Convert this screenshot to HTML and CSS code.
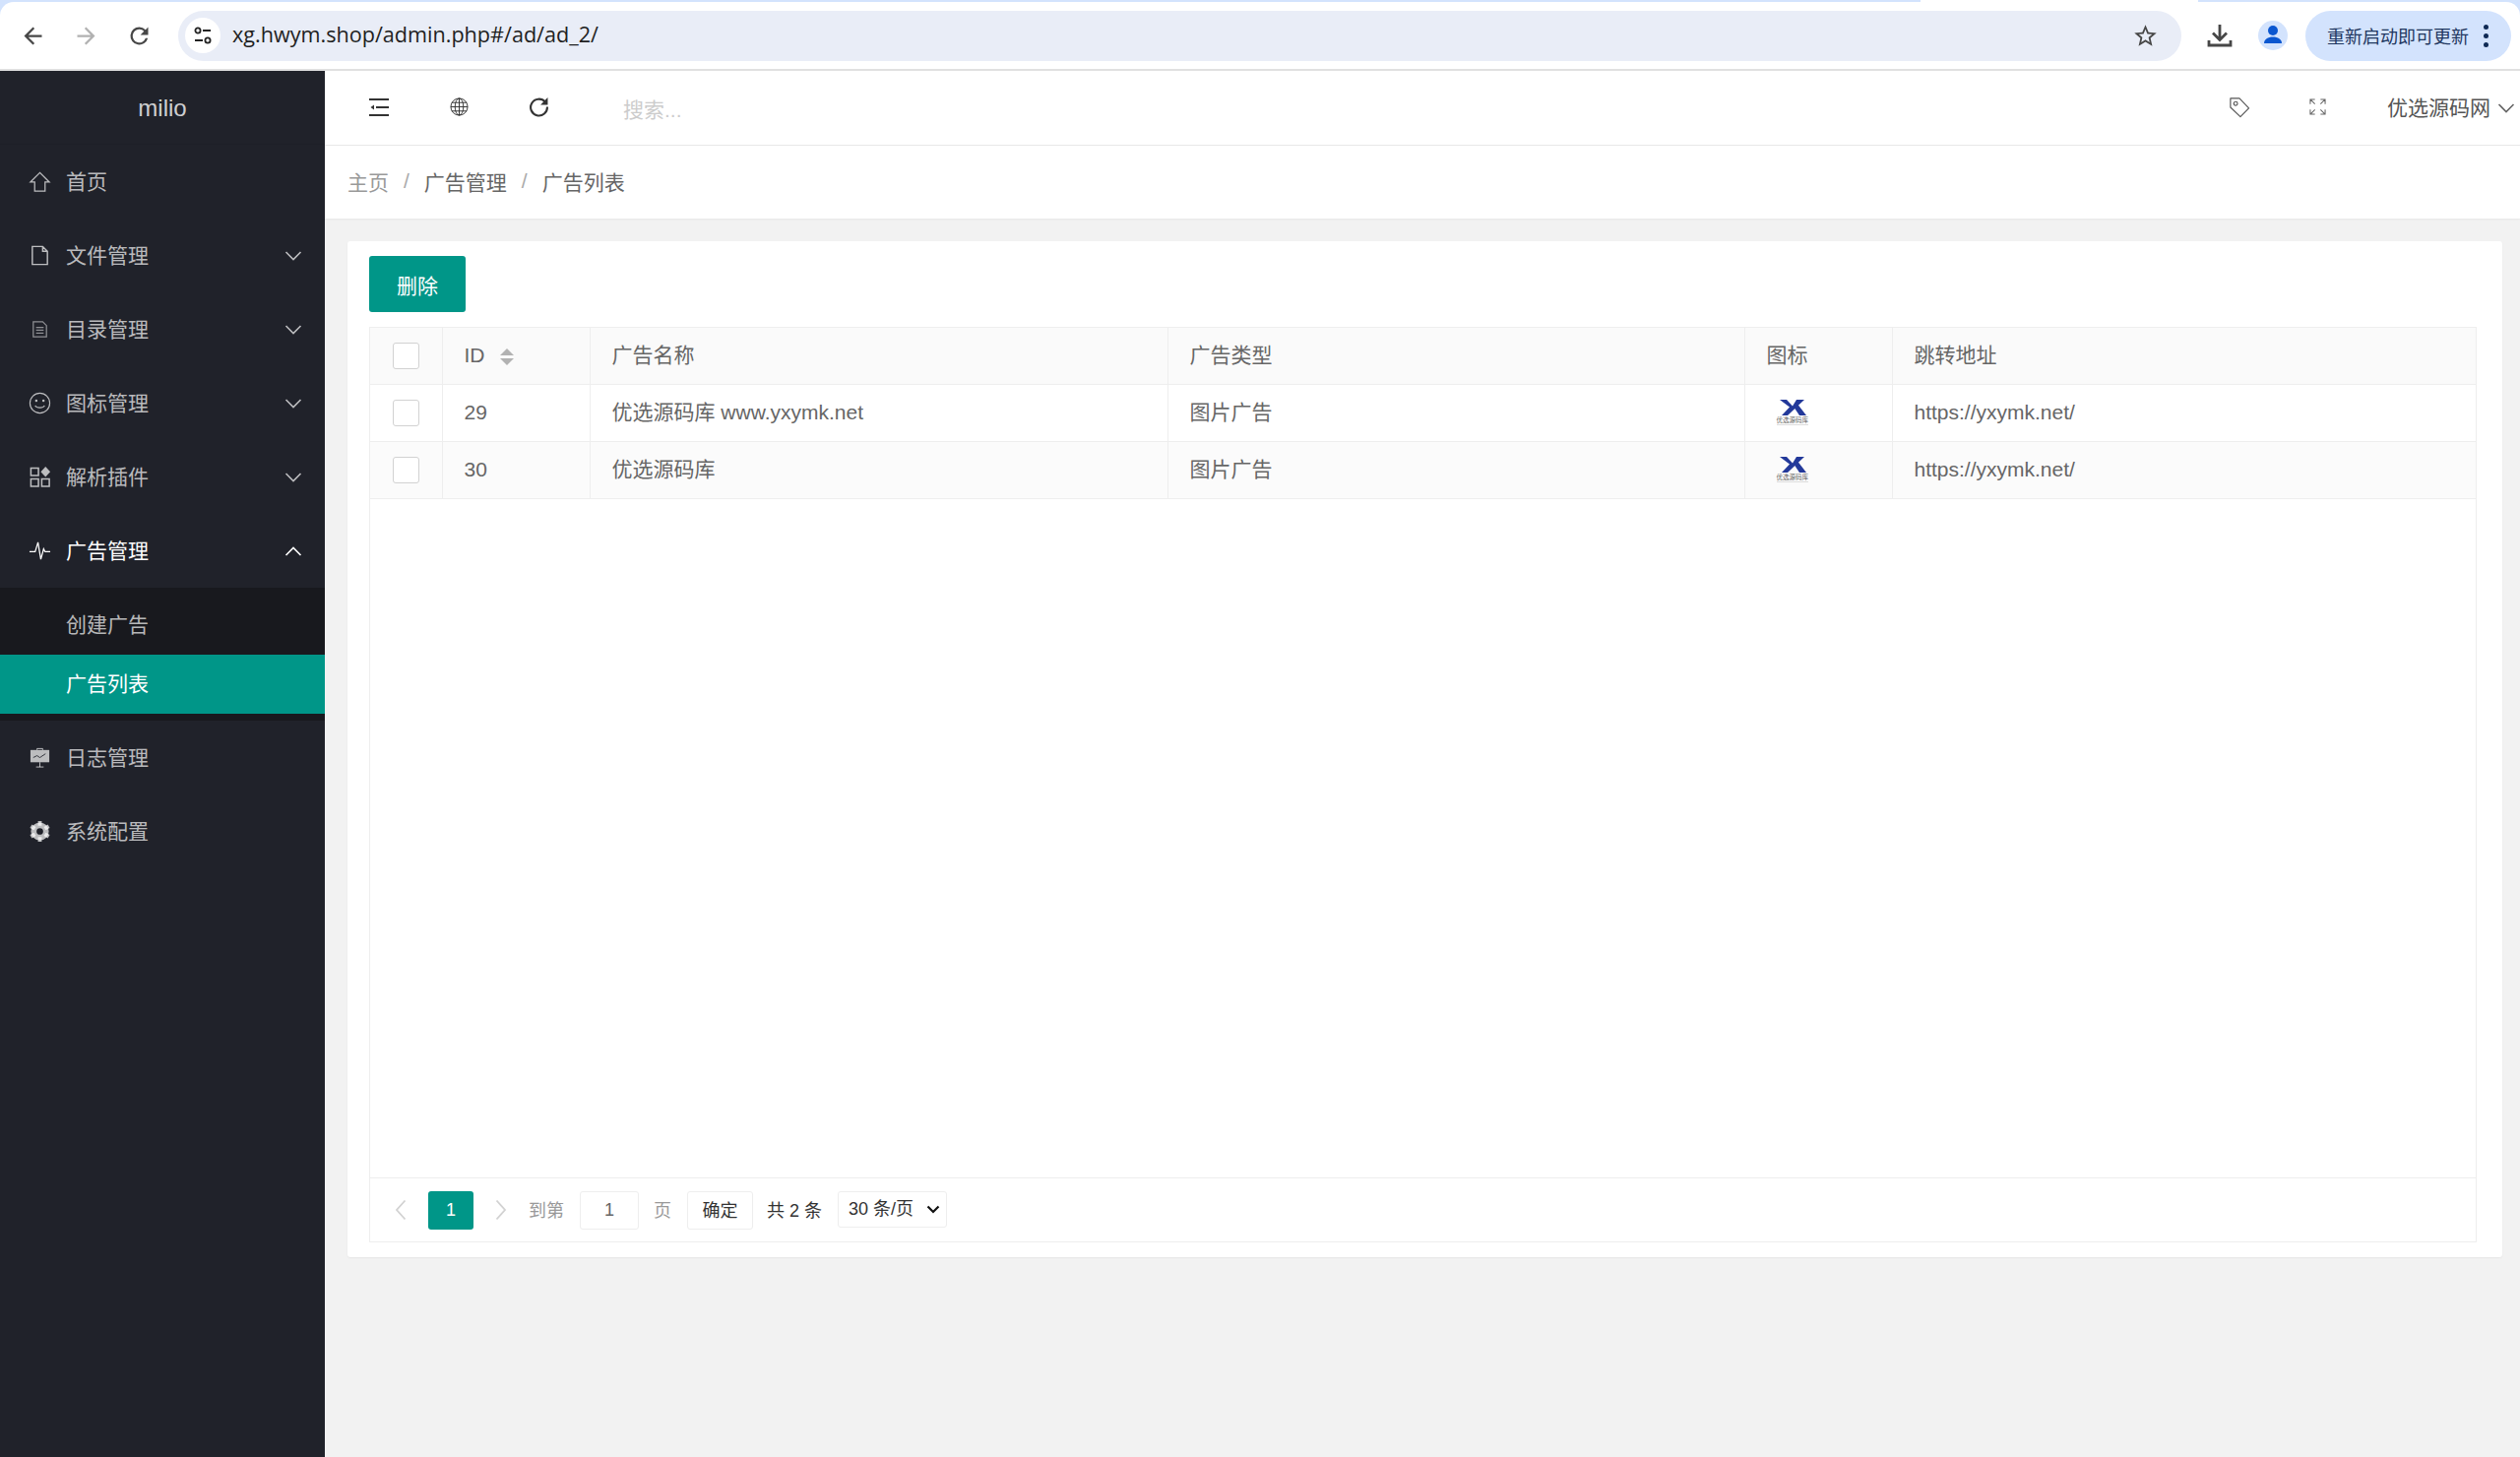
FILE: index.html
```html
<!DOCTYPE html>
<html lang="zh-CN">
<head>
    <meta charset="UTF-8">
    <title>milio</title>
    <link rel="stylesheet" href="styles.css">
</head>
<body>
    <svg class="defs" width="0" height="0">
        <symbol id="chev" viewBox="0 0 18 10"><path d="M1.500 1 9 8.500 16.500 1" fill="none" stroke="currentColor" stroke-width="1.600"/></symbol>
        <symbol id="yx" viewBox="0 0 28 16">
            <path d="M1 0h7l6 6.500L18 0h8L9 16H3l8-8.500z" fill="#23399a"/>
            <path d="M16 8.500 19.500 5 28 16h-7z" fill="#23399a"/>
        </symbol>
    </svg>

    <div class="chrome">
        <div class="tabstrip"><span class="tab-gap"></span></div>
        <div class="toolbar">
            <svg class="tb-ico back" viewBox="0 0 24 24"><path d="M20 11H7.830l5.590-5.590L12 4l-8 8 8 8 1.410-1.410L7.830 13H20z"/></svg>
            <svg class="tb-ico fwd" viewBox="0 0 24 24"><path d="M4 11h12.170l-5.590-5.590L12 4l8 8-8 8-1.410-1.410L16.170 13H4z"/></svg>
            <svg class="tb-ico reload" viewBox="0 0 24 24"><path d="M17.650 6.350A7.960 7.960 0 0 0 12 4a8 8 0 1 0 7.730 10h-2.080A6 6 0 1 1 12 6c1.660 0 3.140.69 4.220 1.780L13 11h7V4z"/></svg>
            <div class="omnibox">
                <span class="site-btn">
                    <svg viewBox="0 0 20 20" width="20" height="20"><circle cx="5" cy="5" r="2.600" fill="none" stroke="#222" stroke-width="1.800"/><path d="M10 5h8M2 15h8" stroke="#222" stroke-width="1.800"/><circle cx="15" cy="15" r="2.600" fill="none" stroke="#222" stroke-width="1.800"/></svg>
                </span>
                <span class="url">xg.hwym.shop/admin.php#/ad/ad_2/</span>
                <svg class="star" viewBox="0 0 24 24"><path d="M22 9.240l-7.190-.62L12 2 9.190 8.630 2 9.240l5.460 4.730L5.820 21 12 17.270 18.180 21l-1.630-7.030zM12 15.400l-3.760 2.270 1-4.280-3.320-2.880 4.380-.38L12 6.100l1.710 4.040 4.380.38-3.320 2.880 1 4.280z"/></svg>
            </div>
            <svg class="download" viewBox="0 0 26 26"><path d="M13 2v15M6 10.500l7 7 7-7" fill="none" stroke="#474747" stroke-width="2.800"/><path d="M2 18v5h22v-5" fill="none" stroke="#474747" stroke-width="2.800"/></svg>
            <span class="avatar">
                <svg viewBox="0 0 30 30" width="30" height="30"><circle cx="15" cy="10" r="5" fill="#0b57d0"/><path d="M6 23c0-4 4-6.500 9-6.500s9 2.500 9 6.500z" fill="#0b57d0"/></svg>
            </span>
            <div class="update-pill">
                <span>重新启动即可更新</span>
                <i class="dots"><b></b><b></b><b></b></i>
            </div>
        </div>
    </div>

    <div class="app">
        <aside class="sidebar">
            <div class="logo">milio</div>
            <ul class="nav">
                <li class="nav-item">
                    <svg class="nav-ico" viewBox="0 0 24 24"><path d="M12 2.500 2 12.500h4.500V22h11v-9.500H22z" fill="none" stroke="currentColor" stroke-width="1.300"/></svg>
                    <span>首页</span>
                </li>
                <li class="nav-item">
                    <svg class="nav-ico" viewBox="0 0 24 24"><path d="M4 2.500h11l5 5V21.500H4zM15 2.500v5h5" fill="none" stroke="currentColor" stroke-width="1.500"/></svg>
                    <span>文件管理</span>
                    <svg class="chev"><use href="#chev"/></svg>
                </li>
                <li class="nav-item">
                    <svg class="nav-ico dim" viewBox="0 0 24 24"><path d="M5 4h10l4 4v12H5zM8 10h8M8 13h8M8 16h8" fill="none" stroke="currentColor" stroke-width="1.300"/></svg>
                    <span>目录管理</span>
                    <svg class="chev"><use href="#chev"/></svg>
                </li>
                <li class="nav-item">
                    <svg class="nav-ico" viewBox="0 0 24 24"><circle cx="12" cy="12" r="10.500" fill="none" stroke="currentColor" stroke-width="1.200"/><circle cx="8.200" cy="9.500" r="1.300" fill="currentColor"/><circle cx="15.800" cy="9.500" r="1.300" fill="currentColor"/><path d="M7 14.500c1.500 3 8.500 3 10 0" fill="none" stroke="currentColor" stroke-width="1.200"/></svg>
                    <span>图标管理</span>
                    <svg class="chev"><use href="#chev"/></svg>
                </li>
                <li class="nav-item">
                    <svg class="nav-ico" viewBox="0 0 24 24"><path d="M2.500 2.500h8v8h-8zM2.500 14h8v8h-8zM14 14h8v8h-8z" fill="none" stroke="currentColor" stroke-width="1.600"/><path d="M18 1l5 5.500-5 5.500-5-5.500z" fill="currentColor"/></svg>
                    <span>解析插件</span>
                    <svg class="chev"><use href="#chev"/></svg>
                </li>
                <li class="nav-item open">
                    <svg class="nav-ico" viewBox="0 0 24 24"><path d="M1 13h6l3-10 3 18 3-11 1.500 3H23" fill="none" stroke="currentColor" stroke-width="1.300"/></svg>
                    <span>广告管理</span>
                    <svg class="chev up"><use href="#chev"/></svg>
                </li>
                <li>
                    <ul class="subnav">
                        <li class="sub-item">创建广告</li>
                        <li class="sub-item active">广告列表</li>
                    </ul>
                </li>
                <li class="nav-item">
                    <svg class="nav-ico" viewBox="0 0 24 24"><path d="M2 4h20v13H2z" fill="currentColor"/><path d="M9 4V2.500h6V4M12 17v5M8 22h8" fill="none" stroke="currentColor" stroke-width="1"/><path d="M5 12l4-2 3 2 6-4" fill="none" stroke="#20222a" stroke-width=".9"/></svg>
                    <span>日志管理</span>
                </li>
                <li class="nav-item">
                    <svg class="nav-ico" viewBox="0 0 24 24"><circle cx="12" cy="12" r="6.500" fill="none" stroke="currentColor" stroke-width="6"/><path d="M12 1v5M12 18v5M2.500 6.500l4.300 2.500M17.200 15l4.300 2.500M2.500 17.500 6.800 15M17.200 9l4.300-2.500" stroke="currentColor" stroke-width="4"/></svg>
                    <span>系统配置</span>
                </li>
            </ul>
        </aside>

        <main class="main">
            <header class="topbar">
                <svg class="top-ico fold" viewBox="0 0 20 18"><path d="M0 1h20M7 9h13M0 17h20" stroke="#333" stroke-width="1.800"/><path d="M1.500 9 5 6.500v5z" fill="#333"/></svg>
                <svg class="top-ico globe" viewBox="0 0 20 20"><g fill="none" stroke="#333" stroke-width="1"><circle cx="10" cy="10" r="9"/><ellipse cx="10" cy="10" rx="4.500" ry="9"/><path d="M10 1v18M1 10h18M2 5.500h16M2 14.500h16"/></g></svg>
                <svg class="top-ico refresh" viewBox="0 0 20 20"><path d="M16 5.200A8 8 0 1 0 18 10" fill="none" stroke="#333" stroke-width="2"/><path d="M18.500 1v7h-7z" fill="#333"/></svg>
                <span class="search">搜索...</span>
                <svg class="top-ico tag" viewBox="0 0 24 24"><path d="M3 3h9.500L22.500 13.500 13.500 22.500 3 12.500z" fill="none" stroke="#555" stroke-width="1.200" stroke-linejoin="round"/><circle cx="8.500" cy="8.500" r="2" fill="none" stroke="#555" stroke-width="1.200"/></svg>
                <svg class="top-ico full" viewBox="0 0 18 18"><path d="M1 6V1h5M1 1l5 5M12 1h5v5M17 1l-5 5M1 12v5h5M1 17l5-5M17 12v5h-5M17 17l-5-5" fill="none" stroke="#666" stroke-width="1.100"/></svg>
                <span class="user">优选源码网</span>
                <svg class="chev user-chev"><use href="#chev"/></svg>
            </header>

            <nav class="crumbs">
                <span class="crumb-home">主页</span><i>/</i><span>广告管理</span><i>/</i><span>广告列表</span>
            </nav>

            <section class="content">
                <div class="card">
                    <button class="btn-del">删除</button>
                    <div class="table-box">
                        <div class="table-wrap">
                            <table class="grid">
                                <thead>
                                    <tr>
                                        <th class="col-check"><span class="check"></span></th>
                                        <th class="col-id">ID <i class="sort"><b class="sort-up"></b><b class="sort-down"></b></i></th>
                                        <th class="col-name">广告名称</th>
                                        <th class="col-type">广告类型</th>
                                        <th class="col-icon">图标</th>
                                        <th>跳转地址</th>
                                    </tr>
                                </thead>
                                <tbody>
                                    <tr>
                                        <td class="col-check"><span class="check"></span></td>
                                        <td>29</td>
                                        <td>优选源码库 www.yxymk.net</td>
                                        <td>图片广告</td>
                                        <td class="icon-cell">
                                            <span class="ad-logo"><svg width="28" height="16"><use href="#yx"/></svg><em>优选源码库</em></span>
                                        </td>
                                        <td>https://yxymk.net/</td>
                                    </tr>
                                    <tr class="even">
                                        <td class="col-check"><span class="check"></span></td>
                                        <td>30</td>
                                        <td>优选源码库</td>
                                        <td>图片广告</td>
                                        <td class="icon-cell">
                                            <span class="ad-logo"><svg width="28" height="16"><use href="#yx"/></svg><em>优选源码库</em></span>
                                        </td>
                                        <td>https://yxymk.net/</td>
                                    </tr>
                                </tbody>
                            </table>
                        </div>
                        <div class="pager">
                            <svg class="pg-arrow" viewBox="0 0 12 22"><path d="M10.500 1.500 2 11l8.500 9.500" fill="none" stroke="#d2d2d2" stroke-width="1.800"/></svg>
                            <span class="pg-cur">1</span>
                            <svg class="pg-arrow next" viewBox="0 0 12 22"><path d="M1.500 1.500 10 11l-8.500 9.500" fill="none" stroke="#d2d2d2" stroke-width="1.800"/></svg>
                            <span class="pg-label">到第</span>
                            <input class="pg-input" type="text" value="1">
                            <span class="pg-label">页</span>
                            <button class="pg-ok">确定</button>
                            <span class="pg-count">共 2 条</span>
                            <div class="pg-select">
                                <select class="pg-size">
                                    <option>30 条/页</option>
                                </select>
                                <svg class="pg-select-arrow" viewBox="0 0 14 9"><path d="M1.500 1.500 7 7l5.500-5.500" fill="none" stroke="#111" stroke-width="2.200"/></svg>
                            </div>
                        </div>
                    </div>
                </div>
            </section>
        </main>
    </div>
</body>
</html>
```

FILE: styles.css
```css
* {
    margin: 0;
    padding: 0;
    box-sizing: border-box;
}

html, body {
    height: 1480px;
    overflow: hidden;
}

body {
    font-family: "Liberation Sans", "Noto Sans CJK SC", sans-serif;
    font-size: 21px;
    color: #666;
    background: #f2f2f2;
}

ul {
    list-style: none;
}

i, em {
    font-style: normal;
}

.defs {
    position: absolute;
}

/* browser bar */
.chrome {
    height: 72px;
    background: #d3e3fd;
    border-bottom: 2px solid #e0e0e0;
    display: flex;
    flex-direction: column;
}

.tabstrip {
    height: 2px;
    padding-left: 1951px;
}

.tab-gap {
    display: block;
    width: 282px;
    height: 2px;
    background: #fff;
}

.toolbar {
    flex: 1;
    background: #fff;
    border-radius: 14px 14px 0 0;
    display: flex;
    align-items: center;
    padding-left: 20px;
}

.tb-ico {
    width: 27px;
    height: 27px;
    fill: #474747;
    margin-right: 27px;
    flex: none;
}

.tb-ico.fwd {
    fill: #b1b1b1;
}

.tb-ico.reload {
    margin-right: 26px;
}

.omnibox {
    width: 2035px;
    height: 51px;
    background: #e9edf7;
    border-radius: 26px;
    display: flex;
    align-items: center;
    padding: 0 23px 0 7px;
    flex: none;
}

.site-btn {
    width: 36px;
    height: 36px;
    border-radius: 50%;
    background: #fff;
    display: flex;
    align-items: center;
    justify-content: center;
    flex: none;
}

.url {
    flex: 1;
    margin-left: 12px;
    padding-bottom: 3px;
    font-family: "Open Sans", sans-serif;
    font-size: 21.600px;
    color: #1f1f1f;
}

.star {
    width: 27px;
    height: 27px;
    fill: #474747;
}

.download {
    width: 26px;
    height: 26px;
    margin-left: 26px;
    flex: none;
}

.avatar {
    width: 30px;
    height: 30px;
    margin-left: 26px;
    border-radius: 50%;
    background: #d3e3fd;
    flex: none;
}

.update-pill {
    width: 209px;
    height: 51px;
    margin-left: 18px;
    background: #d3e3fd;
    border-radius: 26px;
    display: flex;
    align-items: center;
    padding-left: 22px;
    font-size: 18px;
    color: #1f3760;
    flex: none;
}

.dots {
    display: flex;
    flex-direction: column;
    gap: 4px;
    margin-left: 15px;
}

.dots b {
    width: 5px;
    height: 5px;
    border-radius: 50%;
    background: #0f2a55;
}

/* page */
.app {
    display: flex;
    height: 1408px;
}

.sidebar {
    width: 330px;
    background: #20222a;
    color: rgba(255, 255, 255, 0.7);
    flex: none;
}

.logo {
    height: 75px;
    line-height: 76px;
    text-align: center;
    font-size: 24px;
    color: rgba(255, 255, 255, 0.8);
    border-bottom: 1px solid #1e2027;
}

.nav-item {
    height: 75px;
    display: flex;
    align-items: center;
    padding-left: 29px;
    position: relative;
}

.nav-item span {
    margin-left: 15px;
    padding-bottom: 4px;
}

.nav-item.open {
    color: #fff;
}

.nav-ico {
    width: 23px;
    height: 23px;
    flex: none;
}

.nav-ico.dim {
    opacity: 0.7;
}

.chev {
    width: 18px;
    height: 10px;
}

.nav-item .chev {
    position: absolute;
    right: 23px;
    top: 33px;
}

.chev.up {
    transform: rotate(180deg);
}

.subnav {
    background: #18191e;
    padding: 8px 0 7px;
}

.sub-item {
    height: 60px;
    line-height: 60px;
    padding-left: 67px;
}

.sub-item.active {
    background: #009688;
    color: #fff;
}

.main {
    flex: 1;
    min-width: 0;
    display: flex;
    flex-direction: column;
}

.topbar {
    height: 76px;
    background: #fff;
    border-bottom: 1px solid #e8e8e8;
    display: flex;
    align-items: center;
    padding-left: 45px;
    flex: none;
}

.top-ico {
    flex: none;
    position: relative;
    top: -1px;
}

.fold {
    width: 20px;
    height: 18px;
}

.globe {
    width: 19px;
    height: 19px;
    margin-left: 62px;
}

.refresh {
    width: 21px;
    height: 21px;
    margin-left: 61px;
}

.search {
    margin-left: 75px;
    color: #ccc;
    width: 1630px;
    flex: none;
}

.tag {
    width: 23px;
    height: 23px;
}

.full {
    width: 17px;
    height: 17px;
    margin-left: 60px;
}

.user {
    margin-left: 62px;
    padding-bottom: 3px;
    color: #555;
}

.user-chev {
    margin-left: 7px;
    color: #666;
}

.crumbs {
    height: 74px;
    background: #fff;
    display: flex;
    align-items: center;
    padding: 0 0 3px 23px;
    color: #666;
    box-shadow: 0 1px 2px rgba(0, 0, 0, 0.05);
    flex: none;
}

.crumbs i {
    margin: 0 15px;
    color: #aaa;
}

.crumb-home {
    color: #999;
}

.content {
    flex: 1;
    padding: 23px 18px 0 23px;
}

.card {
    height: 1032px;
    background: #fff;
    border-radius: 3px;
    box-shadow: 0 1px 2px rgba(0, 0, 0, 0.05);
    padding: 15px 26px 15px 22px;
    display: flex;
    flex-direction: column;
}

.btn-del {
    width: 98px;
    height: 57px;
    background: #009688;
    color: #fff;
    border: 0;
    border-radius: 3px;
    font: inherit;
    flex: none;
    align-self: flex-start;
    margin-bottom: 15px;
}

.table-box {
    flex: 1;
    border: 1px solid #eee;
    display: flex;
    flex-direction: column;
    min-height: 0;
}

.table-wrap {
    flex: 1;
    min-height: 0;
}

.grid {
    width: 100%;
    border-collapse: collapse;
    table-layout: fixed;
}

.grid th, .grid td {
    height: 58px;
    padding: 0 22px 1px;
    line-height: 24px;
    text-align: left;
    font-weight: normal;
    border: 1px solid #eee;
    white-space: nowrap;
}

.grid th {
    height: 57px;
}

.grid thead tr {
    background: #fafafa;
}

.grid th:first-child, .grid td:first-child {
    border-left: 0;
    padding: 0;
    text-align: center;
    position: relative;
    box-shadow: 5px 0 6px -3px rgba(0, 0, 0, 0.08);
}

.grid tbody tr:last-child td:first-child {
    box-shadow: 5px 3px 6px -3px rgba(0, 0, 0, 0.08);
}

.grid th:last-child, .grid td:last-child {
    border-right: 0;
}

.grid thead th {
    border-top: 0;
}

.grid tr.even {
    background: #fbfbfb;
}

.col-check {
    width: 73px;
}

.col-id {
    width: 150px;
}

.col-name {
    width: 587px;
}

.col-type {
    width: 586px;
}

.col-icon {
    width: 150px;
}

.check {
    display: inline-block;
    width: 27px;
    height: 27px;
    background: #fff;
    border: 1px solid #d2d2d2;
    border-radius: 3px;
    vertical-align: middle;
}

.sort {
    display: inline-flex;
    flex-direction: column;
    gap: 3px;
    margin-left: 10px;
    vertical-align: middle;
}

.sort-up, .sort-down {
    width: 0;
    height: 0;
    border-left: 7px solid transparent;
    border-right: 7px solid transparent;
}

.sort-up {
    border-bottom: 7px solid #b2b2b2;
}

.sort-down {
    border-top: 7px solid #b2b2b2;
}

.grid .icon-cell {
    padding: 0 0 0 32px;
}

.ad-logo {
    display: inline-flex;
    flex-direction: column;
    align-items: center;
    vertical-align: middle;
}

.ad-logo svg {
    display: block;
}

.ad-logo em {
    font-size: 6.500px;
    line-height: 9px;
    color: #666;
    border-bottom: 1px solid #ddd;
    white-space: nowrap;
}

.pager {
    height: 65px;
    border-top: 1px solid #eee;
    display: flex;
    align-items: center;
    font-size: 18px;
    padding-left: 25px;
    flex: none;
}

.pg-arrow {
    width: 12px;
    height: 22px;
    flex: none;
}

.pg-arrow.next {
    margin-left: 22px;
}

.pg-cur {
    width: 46px;
    height: 39px;
    line-height: 39px;
    margin-left: 22px;
    background: #009688;
    color: #fff;
    text-align: center;
    border-radius: 3px;
}

.pg-label {
    color: #999;
    margin-left: 22px;
    padding-bottom: 3px;
}

.pg-input {
    width: 60px;
    height: 39px;
    margin-left: 16px;
    border: 1px solid #eee;
    border-radius: 3px;
    text-align: center;
    font: inherit;
    color: #666;
}

.pg-input + .pg-label {
    margin-left: 15px;
}

.pg-ok {
    width: 67px;
    height: 39px;
    margin-left: 16px;
    padding-bottom: 3px;
    background: #fff;
    border: 1px solid #eee;
    border-radius: 3px;
    font: inherit;
    color: #333;
}

.pg-count {
    margin-left: 14px;
    padding-bottom: 3px;
    color: #333;
}

.pg-select {
    position: relative;
    margin-left: 16px;
    margin-top: -2px;
}

.pg-size {
    display: block;
    width: 111px;
    height: 37px;
    background: #fff;
    border: 1px solid #eee;
    border-radius: 3px;
    font: inherit;
    color: #333;
    padding-left: 10px;
    appearance: none;
}

.pg-select-arrow {
    position: absolute;
    right: 7px;
    top: 14px;
    width: 14px;
    height: 9px;
}
```
